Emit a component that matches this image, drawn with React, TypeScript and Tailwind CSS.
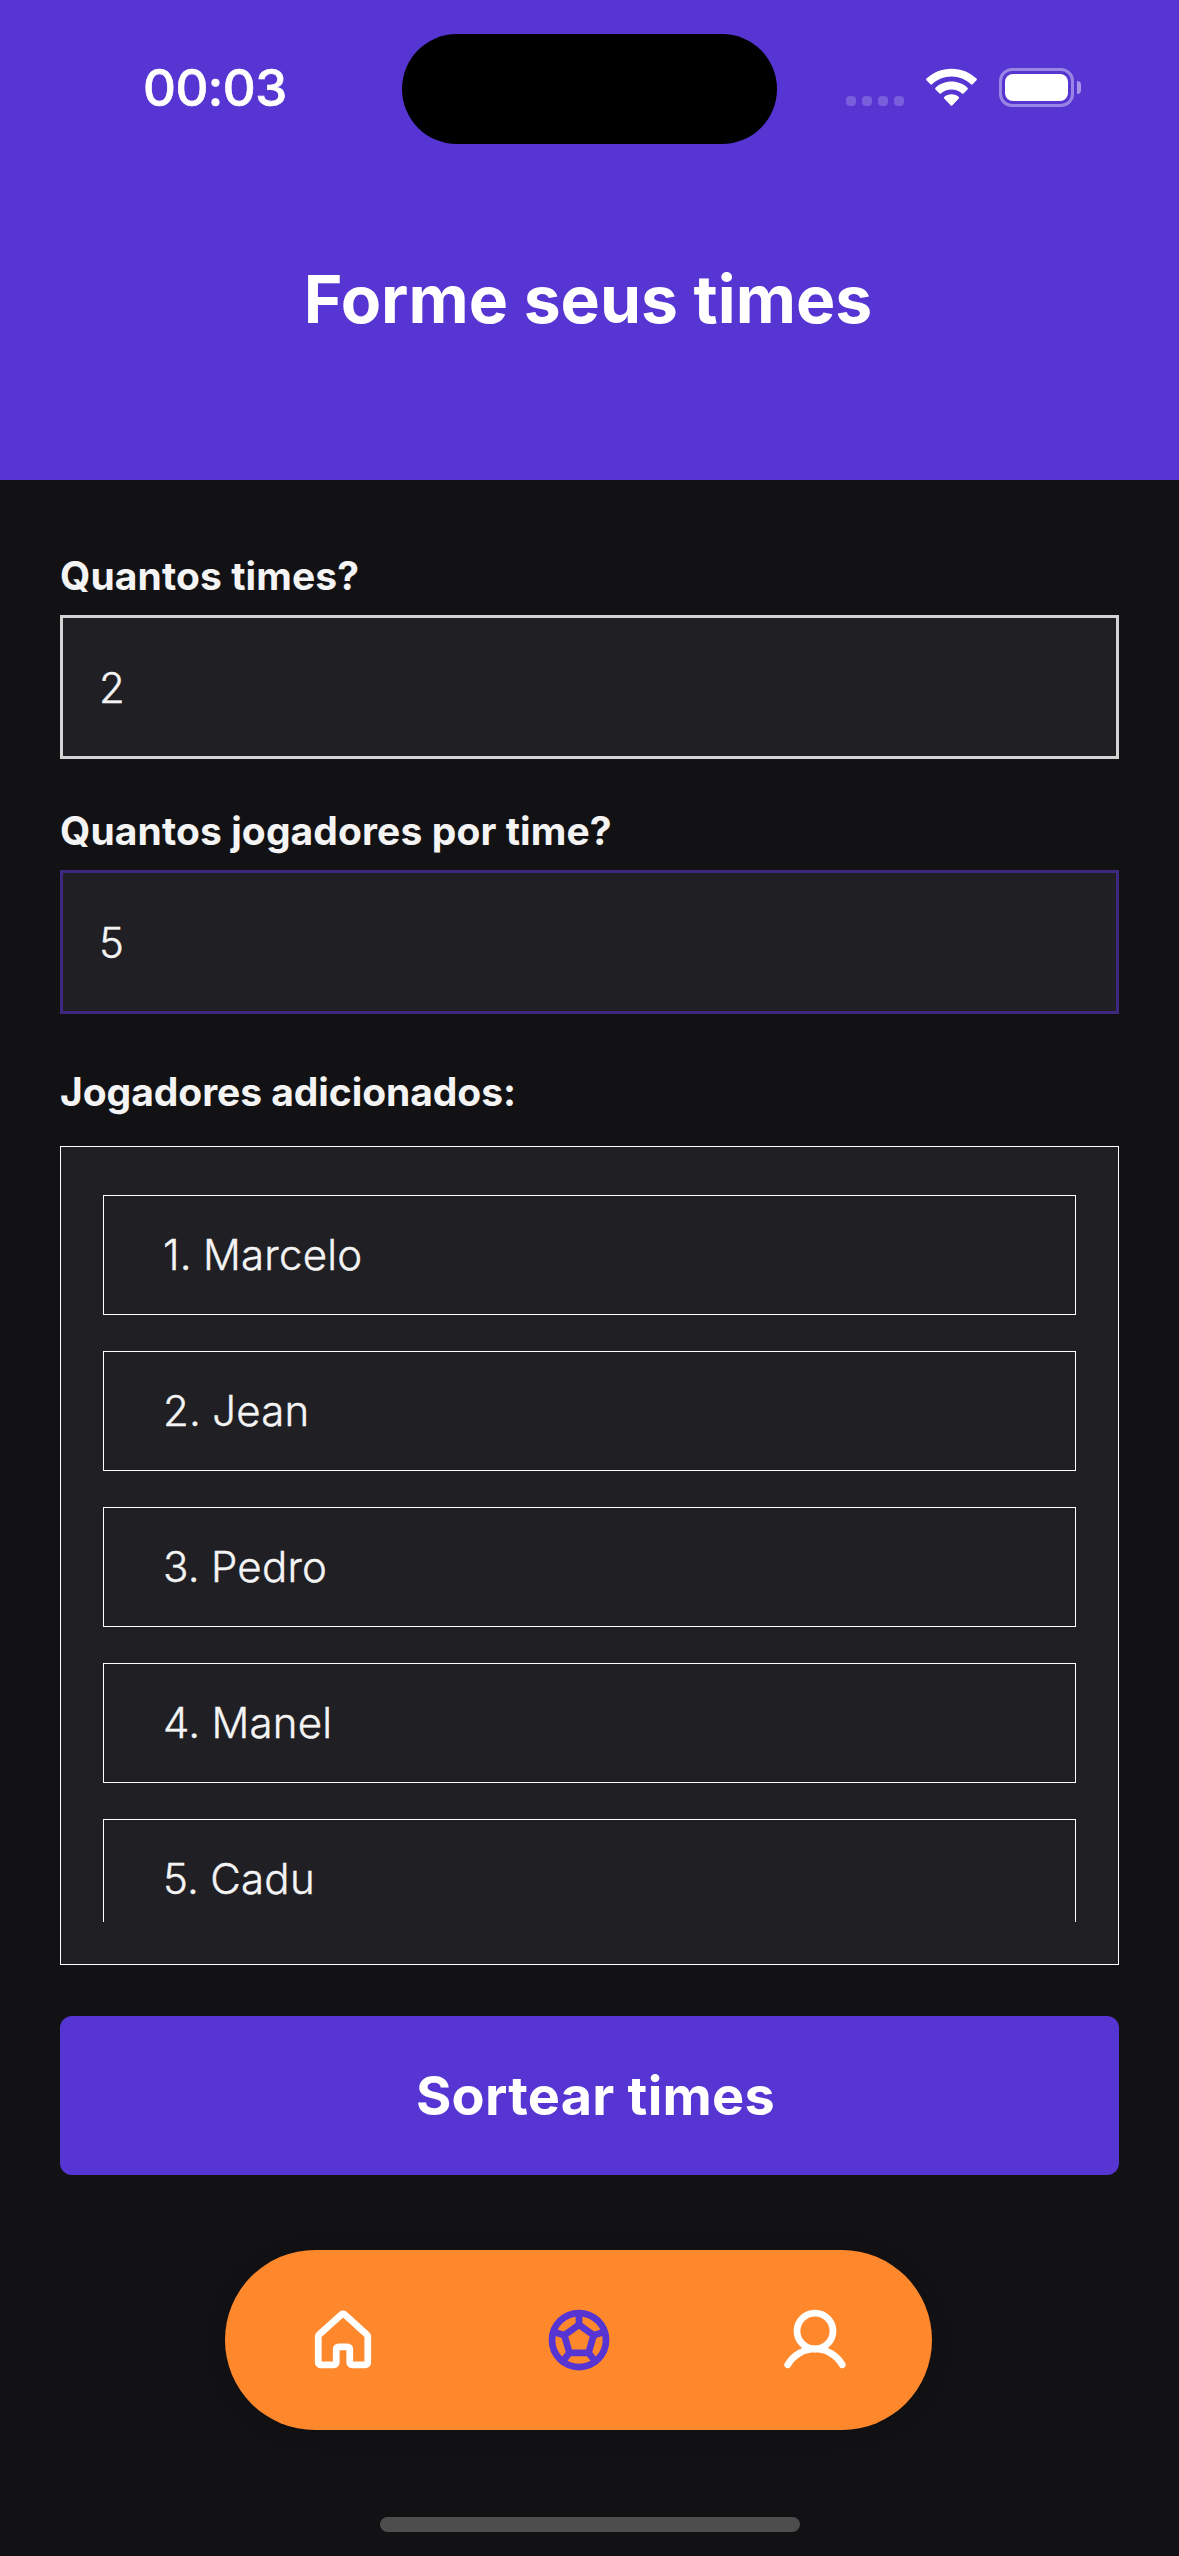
const players = ["Marcelo", "Jean", "Pedro", "Manel", "Cadu"];

function StatusBar() {
  return (
    <div className="flex h-[177px] justify-between">
      <div className="w-[402px] pt-[57px] pl-[143px] text-[51px] leading-[62px] font-medium tracking-[-0.5px] [-webkit-text-stroke:0.7px_#fff]">
        00:03
      </div>
      <div className="mt-[34px] h-[110px] w-[375px] rounded-full bg-black" />
      <div className="flex w-[402px] pl-[69px]">
        <div className="mt-[96px] flex gap-[6px]">
          {[0, 1, 2, 3].map((dot) => (
            <span key={dot} className="h-[10px] w-[10px] rounded-[4px] bg-[#795edb]" />
          ))}
        </div>
        <svg className="mt-[68px] ml-[22px]" width="51" height="39" viewBox="0 0 51 39" fill="#fff">
          <path d="M25.5 0.7C35.2 0.7 44 4.4 50.5 10.6Q51.3 11.5 50.5 12.3L46.6 16.2Q45.8 17 45 16.3C39.8 11.5 33 8.6 25.5 8.6S11.2 11.5 6 16.3Q5.2 17 4.4 16.2L0.5 12.3Q-0.3 11.5 0.5 10.6C7 4.4 15.8 0.7 25.5 0.7Z" />
          <path d="M25.5 13.6C31.7 13.6 37.3 15.9 41.5 19.8Q42.3 20.6 41.5 21.4L37.5 25.4Q36.8 26 36 25.4C33.2 22.9 29.5 21.4 25.5 21.4S17.8 22.9 15 25.4Q14.2 26 13.5 25.4L9.5 21.4Q8.7 20.6 9.5 19.8C13.7 15.9 19.3 13.6 25.5 13.6Z" />
          <path d="M25.5 26.3C28.3 26.3 30.9 27.3 32.8 29Q33.6 29.8 32.8 30.6L26.2 37.4Q25.5 38.1 24.8 37.4L18.2 30.6Q17.4 29.8 18.2 29C20.1 27.3 22.7 26.3 25.5 26.3Z" />
        </svg>
        <div className="mt-[68px] ml-[22px] h-[39px] w-[75px] rounded-[13px] border-[3px] border-[#9985e4] p-[3px]">
          <div className="h-full w-full rounded-[8px] bg-white" />
        </div>
        <div className="mt-[81px] ml-[3px] h-[13px] w-[4px] rounded-r-full bg-[#a796e8]" />
      </div>
    </div>
  );
}

function Field({ label, value, border }: { label: string; value: string; border: string }) {
  return (
    <div className="h-[255px]">
      <label className="block h-[63px] text-[39px] leading-[48px] font-bold tracking-[0.1px]">{label}</label>
      <input
        readOnly
        value={value}
        className={`block h-[144px] w-full border-[3px] bg-[#202024] px-[36px] pt-[1px] text-[42px] font-light outline-none [-webkit-text-stroke:0.4px_#f4f4f5] ${border}`}
      />
    </div>
  );
}

function HomeIcon() {
  return (
    <svg width="72" height="72" viewBox="0 0 256 256" fill="none" stroke="#fff" strokeWidth="24" strokeLinecap="round" strokeLinejoin="round">
      <path d="M152,208V160a8,8,0,0,0-8-8H112a8,8,0,0,0-8,8v48a8,8,0,0,1-8,8H48a8,8,0,0,1-8-8V115.5a8.3,8.3,0,0,1,2.6-5.9l80-72.7a8,8,0,0,1,10.8,0l80,72.7a8.3,8.3,0,0,1,2.6,5.9V208a8,8,0,0,1-8,8H160A8,8,0,0,1,152,208Z" />
    </svg>
  );
}

function BallIcon() {
  return (
    <svg width="72" height="72" viewBox="0 0 256 256" fill="none" stroke="#5635d2" strokeWidth="24" strokeLinecap="round" strokeLinejoin="round">
      <circle cx="128" cy="128" r="96" />
      <path d="M128 74L76 111L94 174H162L180 111Z" />
      <path d="M128 74V32M76 111L38 99M94 174L70 204M162 174L186 204M180 111L218 99" />
    </svg>
  );
}

function UserIcon() {
  return (
    <svg width="72" height="72" viewBox="0 0 256 256" fill="none" stroke="#fff" strokeWidth="24" strokeLinecap="round" strokeLinejoin="round">
      <circle cx="128" cy="96" r="64" />
      <path d="M31,216a112,112,0,0,1,194,0" />
    </svg>
  );
}

export default function App() {
  return (
    <div className="flex h-[2556px] w-[1179px] flex-col overflow-hidden bg-[#121214] font-['Inter',sans-serif] text-[#f4f4f5]">
      <header className="h-[480px] bg-[#5635d2] text-white">
        <StatusBar />
        <h1 className="pt-[82px] pr-[3px] text-center text-[66px] leading-[80px] font-bold">Forme seus times</h1>
      </header>

      <main className="px-[60px] pt-[72px]">
        <Field label="Quantos times?" value="2" border="border-[#d4d4d4]" />
        <Field label="Quantos jogadores por time?" value="5" border="border-[#3c297f]" />

        <h2 className="mt-[6px] h-[78px] text-[39px] leading-[48px] font-bold tracking-[-0.06px]">
          Jogadores adicionados:
        </h2>
        <div className="h-[819px] w-full border border-white bg-[#202024] p-[42px]">
          <ul className="flex h-[733px] flex-col gap-[36px] overflow-hidden pt-[6px]">
            {players.map((name, i) => (
              <li
                key={name}
                className="flex h-[120px] shrink-0 items-center border border-white pb-[2px] pl-[59px] text-[42px] font-light tracking-[0.25px] [word-spacing:-1px] [-webkit-text-stroke:0.4px_#f4f4f5]"
              >
                {i + 1}. {name}
              </li>
            ))}
          </ul>
        </div>

        <button className="mt-[51px] flex h-[159px] w-full items-center justify-center rounded-[12px] bg-[#5635d2] pl-[12px] text-[54px] font-bold tracking-[0.25px] text-white">
          Sortear times
        </button>
      </main>

      <nav className="mt-[75px] ml-[225px] grid h-[180px] w-[707px] shrink-0 grid-cols-3 place-items-center gap-x-[2px] rounded-full bg-[#ff882c] pl-[1px] shadow-[0_3px_24px_rgba(0,0,0,0.12)]">
        <HomeIcon />
        <BallIcon />
        <UserIcon />
      </nav>

      <div className="mx-auto mt-[87px] h-[15px] w-[420px] shrink-0 rounded-full bg-[#4d4d4d]" />
    </div>
  );
}
